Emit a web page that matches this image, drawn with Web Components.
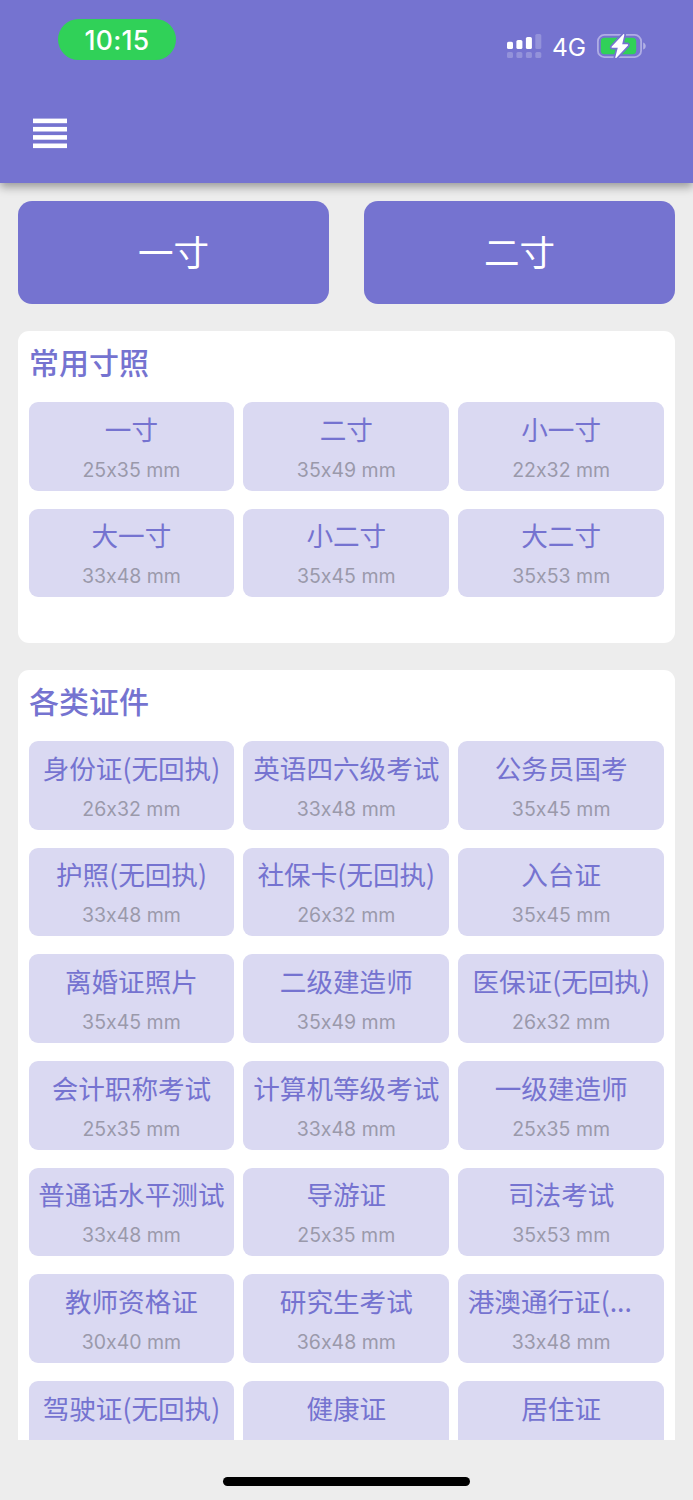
<!DOCTYPE html>
<html lang="zh-CN">
<head>
<meta charset="utf-8">
<title>证件照</title>
<style>
  html, body {
    margin: 0;
    padding: 0;
    background: #ededed;
  }
  body {
    font-family: "Noto Sans CJK SC", sans-serif;
    overflow: hidden;
  }
</style>
</head>
<body>
<photo-app></photo-app>

<script>
const COMMON_SIZES = [
  ["一寸", "25x35 mm"],
  ["二寸", "35x49 mm"],
  ["小一寸", "22x32 mm"],
  ["大一寸", "33x48 mm"],
  ["小二寸", "35x45 mm"],
  ["大二寸", "35x53 mm"]
];

const DOCUMENT_SIZES = [
  ["身份证(无回执)", "26x32 mm"],
  ["英语四六级考试", "33x48 mm"],
  ["公务员国考", "35x45 mm"],
  ["护照(无回执)", "33x48 mm"],
  ["社保卡(无回执)", "26x32 mm"],
  ["入台证", "35x45 mm"],
  ["离婚证照片", "35x45 mm"],
  ["二级建造师", "35x49 mm"],
  ["医保证(无回执)", "26x32 mm"],
  ["会计职称考试", "25x35 mm"],
  ["计算机等级考试", "33x48 mm"],
  ["一级建造师", "25x35 mm"],
  ["普通话水平测试", "33x48 mm"],
  ["导游证", "25x35 mm"],
  ["司法考试", "35x53 mm"],
  ["教师资格证", "30x40 mm"],
  ["研究生考试", "36x48 mm"],
  ["港澳通行证(...", "33x48 mm", true],
  ["驾驶证(无回执)", ""],
  ["健康证", ""],
  ["居住证", ""]
];

class StatusBar extends HTMLElement {
  constructor() {
    super();
    this.attachShadow({ mode: "open" });
    this.shadowRoot.innerHTML = /*html*/`
      <style>
      :host {
        display: flex;
        justify-content: space-between;
        align-items: flex-start;
        padding: 19px 47px 0 58px;
        color: #fff;
        font-family: Inter, sans-serif;
      }
      .time {
        width: 118px;
        height: 41px;
        line-height: 43px;
        border-radius: 20.5px;
        background: #30d158;
        text-align: center;
        font-size: 26.5px;
        font-weight: 500;
        letter-spacing: .3px;
      }
      .right {
        display: flex;
        align-items: center;
        height: 24px;
        padding-top: 15px;
      }
      .net {
        width: 33px;
        margin: 2px 12px 0 10px;
        font-size: 24.5px;
        line-height: 24px;
        white-space: nowrap;
      }
      svg { display: block; }
      </style>
      <div class="time">10:15</div>
      <div class="right">
        <svg width="35" height="24" viewBox="0 0 35 24" fill="#fff">
          <rect x="0" y="7.7" width="6" height="7.3" rx="1.6"/>
          <rect x="9.4" y="6" width="6" height="9" rx="1.6"/>
          <rect x="18.9" y="3" width="6" height="12" rx="1.6"/>
          <g opacity=".22">
            <rect x="28.3" y="0" width="6" height="15" rx="1.6"/>
            <rect x="0" y="18" width="6" height="6" rx="1.6"/>
            <rect x="9.4" y="18" width="6" height="6" rx="1.6"/>
            <rect x="18.9" y="18" width="6" height="6" rx="1.6"/>
            <rect x="28.3" y="18" width="6" height="6" rx="1.6"/>
          </g>
        </svg>
        <div class="net">4G</div>
        <svg width="49" height="24" viewBox="0 0 49 24">
          <rect x=".9" y=".9" width="43.2" height="22.2" rx="6.4" fill="none" stroke="#fff" stroke-opacity=".42" stroke-width="1.8"/>
          <path d="M46.2 8.4c1.6.6 2.5 2 2.5 3.6s-.9 3-2.5 3.6z" fill="#fff" fill-opacity=".45"/>
          <rect x="3.8" y="3.8" width="35.4" height="16.4" rx="3.6" fill="#30d158"/>
          <path d="M26.1.4 14.8 12.6c-.5.6-.2 1.1.5 1.1h5.5L18.3 23.2c-.2.9.7 1.1 1.2.5L30.9 11.5c.5-.6.2-1.2-.5-1.2h-5.2L27.3 1c.2-.8-.6-1.2-1.2-.6z" fill="#fff" stroke="#7573d0" stroke-width="3.4" paint-order="stroke"/>
        </svg>
      </div>`;
  }
}

class AppHeader extends HTMLElement {
  constructor() {
    super();
    this.attachShadow({ mode: "open" });
    this.shadowRoot.innerHTML = /*html*/`
      <style>
      :host {
        display: block;
        flex: none;
        position: relative;
        z-index: 1;
        height: 183px;
        background: #7573d0;
        box-shadow: 0 4px 9px rgba(0, 0, 0, .36);
      }
      .menu {
        display: block;
        margin: 58px 0 0 33px;
      }
      </style>
      <slot></slot>
      <svg class="menu" width="34" height="31" viewBox="0 0 34 31" fill="#fff">
        <rect y=".6" width="34" height="4.6"/>
        <rect y="8.9" width="34" height="4.6"/>
        <rect y="17.1" width="34" height="4.6"/>
        <rect y="25.5" width="34" height="4.6"/>
      </svg>`;
  }
}

class QuickButton extends HTMLElement {
  constructor() {
    super();
    this.attachShadow({ mode: "open" });
    this.shadowRoot.innerHTML = /*html*/`
      <style>
      :host {
        display: flex;
        align-items: center;
        justify-content: center;
        box-sizing: border-box;
        height: 103px;
        padding-bottom: 4px;
        border-radius: 14px;
        background: #7573d0;
        color: #fff;
        font-size: 35.5px;
        line-height: 50px;
      }
      </style>
      <slot></slot>`;
  }
}

class SizeCard extends HTMLElement {
  constructor() {
    super();
    this.attachShadow({ mode: "open" });
    this.shadowRoot.innerHTML = /*html*/`
      <style>
      :host {
        display: flex;
        flex-direction: column;
        box-sizing: border-box;
        height: 88.8px;
        padding: 6.8px 9.5px 0;
        border-radius: 9px;
        background: #dad9f2;
        text-align: center;
        white-space: nowrap;
      }
      :host([clipped]) .name { text-align: left; }
      .name {
        height: 39px;
        line-height: 39px;
        font-size: 26.6px;
        color: #7573d0;
      }
      .size {
        margin-top: 10px;
        line-height: 24px;
        font-family: Inter, sans-serif;
        font-size: 19.5px;
        /* keep the plain "x" between digits */
        font-feature-settings: "calt" 0;
        color: #9a99ab;
      }
      </style>
      <div class="name"><slot></slot></div>
      <div class="size"><slot name="size"></slot></div>`;
  }
}

class SizeSection extends HTMLElement {
  constructor() {
    super();
    this.attachShadow({ mode: "open" });
    this.shadowRoot.innerHTML = /*html*/`
      <style>
      :host {
        display: block;
        padding: 8px 10.9px 45.6px 10.5px;
        border-radius: 11px;
        background: #fff;
      }
      h2 {
        margin: 0 0 19.2px .6px;
        font-size: 30px;
        line-height: 44px;
        font-weight: 500;
        color: #7573d0;
      }
      .grid {
        display: grid;
        grid-template-columns: repeat(3, 1fr);
        gap: 17.85px 9px;
      }
      </style>
      <h2><slot></slot></h2>
      <div class="grid"></div>`;
  }

  set items(list) {
    const grid = this.shadowRoot.querySelector(".grid");
    grid.innerHTML = list.map(([name, size, clipped]) =>
      `<size-card${clipped ? " clipped" : ""}>${name}${size ? `<span slot="size">${size}</span>` : ""}</size-card>`
    ).join("");
  }
}

class PhotoApp extends HTMLElement {
  constructor() {
    super();
    this.attachShadow({ mode: "open" });
    this.shadowRoot.innerHTML = /*html*/`
      <style>
      :host {
        display: flex;
        flex-direction: column;
        width: 693px;
        height: 1500px;
        overflow: hidden;
        background: #ededed;
      }
      main {
        flex: 1;
        min-height: 0;
        overflow: hidden;
        padding: 18px 18px 0;
      }
      .quick {
        display: grid;
        grid-template-columns: 1fr 1fr;
        gap: 35px;
      }
      size-section { margin-top: 26.8px; }
      footer {
        flex: none;
        display: flex;
        justify-content: center;
        height: 60.5px;
      }
      .home {
        width: 247px;
        height: 9px;
        margin-top: 37px;
        border-radius: 4.5px;
        background: #000;
      }
      </style>
      <app-header><status-bar></status-bar></app-header>
      <main>
        <div class="quick">
          <quick-button>一寸</quick-button>
          <quick-button>二寸</quick-button>
        </div>
        <size-section id="common">常用寸照</size-section>
        <size-section id="documents">各类证件</size-section>
      </main>
      <footer><div class="home"></div></footer>`;
  }

  connectedCallback() {
    this.shadowRoot.getElementById("common").items = COMMON_SIZES;
    this.shadowRoot.getElementById("documents").items = DOCUMENT_SIZES;
  }
}

customElements.define("status-bar", StatusBar);
customElements.define("app-header", AppHeader);
customElements.define("quick-button", QuickButton);
customElements.define("size-card", SizeCard);
customElements.define("size-section", SizeSection);
customElements.define("photo-app", PhotoApp);
</script>
</body>
</html>
